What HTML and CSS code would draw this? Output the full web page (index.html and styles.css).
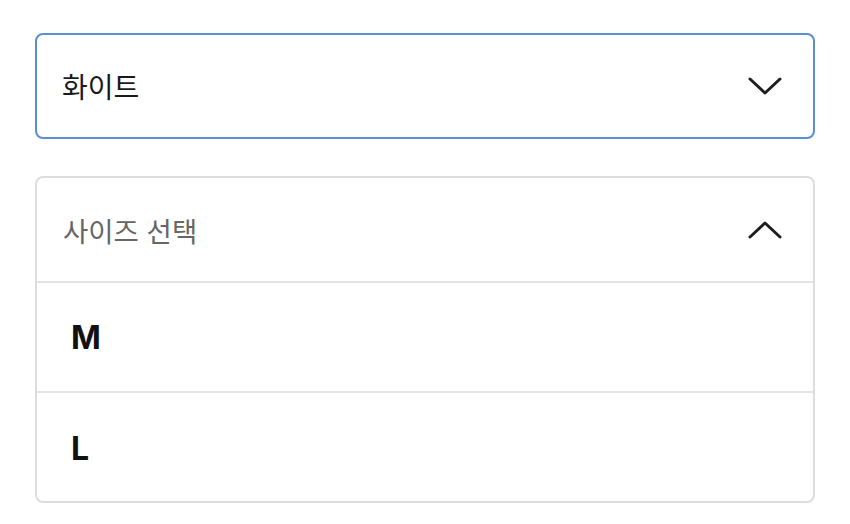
FILE: index.html
```html
<!DOCTYPE html>
<html lang="ko">
<head>
<meta charset="utf-8">
<link rel="stylesheet" href="styles.css">
</head>
<body>
<div class="page">
  <div class="select select--active">
    <span class="select__value">화이트</span>
    <svg class="chev" viewBox="0 0 34 20" width="34" height="20"><path d="M2 3 L17 17 L32 3" fill="none" stroke="#1e1e1e" stroke-width="3" stroke-linecap="round" stroke-linejoin="round"/></svg>
  </div>
  <div class="dropdown">
    <div class="dropdown__head">
      <span class="dropdown__placeholder">사이즈 선택</span>
      <svg class="chev" viewBox="0 0 34 20" width="34" height="20"><path d="M2 17 L17 3 L32 17" fill="none" stroke="#1e1e1e" stroke-width="3" stroke-linecap="round" stroke-linejoin="round"/></svg>
    </div>
    <div class="dropdown__item">M</div>
    <div class="dropdown__item">L</div>
  </div>
</div>
</body>
</html>
```
FILE: styles.css
```css
html, body {
  margin: 0;
  padding: 0;
  background: #ffffff;
}
.page {
  padding: 33px 35px 0 35px;
  display: flex;
  flex-direction: column;
  gap: 37px;
  font-family: "Noto Sans CJK KR", "Noto Sans", sans-serif;
}
.select {
  box-sizing: border-box;
  height: 106px;
  border: 2px solid #5b8dd3;
  border-radius: 8px;
  display: flex;
  align-items: center;
  justify-content: space-between;
  padding: 0 31px 0 25px;
}
.select__value {
  font-size: 28px;
  color: #1a1a1a;
}
.chev {
  display: block;
}
.dropdown {
  box-sizing: border-box;
  border: 2px solid #dddddd;
  border-radius: 8px;
  display: flex;
  flex-direction: column;
}
.dropdown__head {
  box-sizing: border-box;
  height: 105px;
  display: flex;
  align-items: center;
  justify-content: space-between;
  padding: 0 31px 0 26px;
  border-bottom: 2px solid #e4e4e4;
}
.dropdown__placeholder {
  font-size: 27.5px;
  color: #666666;
}
.dropdown__item {
  box-sizing: border-box;
  height: 108px;
  display: flex;
  align-items: center;
  padding: 0 34px;
  font-family: "Inter", "Liberation Sans", sans-serif;
  font-weight: 700;
  font-size: 32px;
  color: #111111;
}
.dropdown__item + .dropdown__item {
  border-top: 2px solid #e4e4e4;
  height: 110px;
  padding-top: 2px;
}
```
